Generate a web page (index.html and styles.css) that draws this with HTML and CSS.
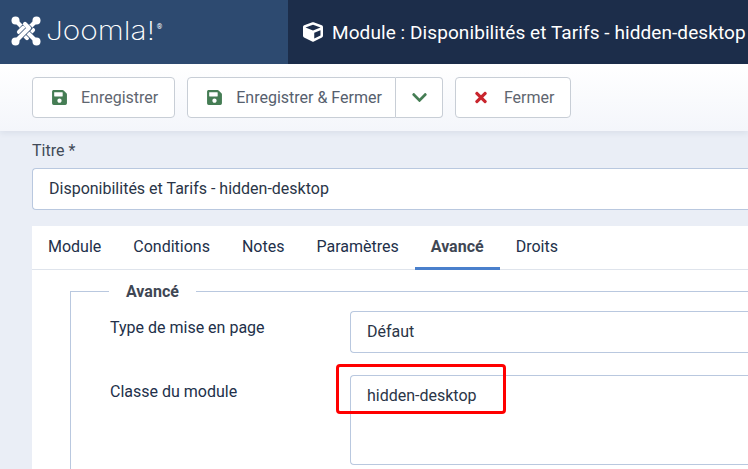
FILE: index.html
```html
<!DOCTYPE html>
<html lang="fr">
  <head>
    <title>Module : Disponibilités et Tarifs - hidden-desktop</title>
    <meta charset="UTF-8" />
    <link rel="stylesheet" href="styles.css">
  </head>
  <body>
    <header class="topbar">
      <div class="brand">
        <svg class="brand-mark" viewBox="0 0 30 30">
          <g fill="none" stroke-linecap="round" stroke-linejoin="round">
            <path stroke="#fff" stroke-width="4.2" d="M5 5 L18 18 L22 14" />
            <path stroke="#2d4a70" stroke-width="5.6" d="M20.5 9.5 L12 18" />
            <path stroke="#fff" stroke-width="4.2" d="M25 5 L12 18 L16 22" />
            <path stroke="#2d4a70" stroke-width="5.6" d="M20.5 20.5 L12 12" />
            <path stroke="#fff" stroke-width="4.2" d="M25 25 L12 12 L8 16" />
            <path stroke="#2d4a70" stroke-width="5.6" d="M9.5 20.5 L18 12" />
            <path stroke="#fff" stroke-width="4.2" d="M5 25 L18 12 L14 8" />
          </g>
          <circle cx="4.5" cy="4.5" r="4" fill="#fff" />
          <circle cx="25.5" cy="4.5" r="4" fill="#fff" />
          <circle cx="4.5" cy="25.5" r="4" fill="#fff" />
          <circle cx="25.5" cy="25.5" r="4" fill="#fff" />
        </svg>
        <span class="brand-name">Joomla!</span><span class="brand-reg">®</span>
      </div>
      <div class="page-title">
        <svg class="title-icon" viewBox="0 0 512 512"><path fill="#fff" d="M239.1 6.3l-208 78c-18.7 7-31.1 25-31.1 45v225.1c0 18.2 10.3 34.8 26.5 42.9l208 104c13.5 6.8 29.4 6.8 42.9 0l208-104c16.3-8.1 26.5-24.8 26.5-42.9V129.3c0-20-12.4-37.9-31.1-44.9l-208-78C262 2.2 250 2.2 239.1 6.3zM256 68.4l192 72v1.1l-192 78-192-78v-1.1l192-72zm32 356V275.5l160-65v133.9l-160 80z"/></svg>
        <h1>Module : Disponibilités et Tarifs - hidden-desktop</h1>
      </div>
    </header>

    <div class="toolbar">
      <button class="btn">
        <svg class="btn-icon" viewBox="0 0 448 512"><path fill="#457d54" d="M433.941 129.941l-83.882-83.882A48 48 0 0 0 316.118 32H48C21.49 32 0 53.49 0 80v352c0 26.51 21.49 48 48 48h352c26.51 0 48-21.49 48-48V163.882a48 48 0 0 0-14.059-33.941zM224 416c-35.346 0-64-28.654-64-64 0-35.346 28.654-64 64-64s64 28.654 64 64c0 35.346-28.654 64-64 64zm96-304.52V212c0 6.627-5.373 12-12 12H76c-6.627 0-12-5.373-12-12V108c0-6.627 5.373-12 12-12h228.52c3.183 0 6.235 1.264 8.485 3.515l3.48 3.48A11.996 11.996 0 0 1 320 111.48z"/></svg>
        Enregistrer
      </button>
      <div class="btn-group">
        <button class="btn btn-main">
          <svg class="btn-icon" viewBox="0 0 448 512"><path fill="#457d54" d="M433.941 129.941l-83.882-83.882A48 48 0 0 0 316.118 32H48C21.49 32 0 53.49 0 80v352c0 26.51 21.49 48 48 48h352c26.51 0 48-21.49 48-48V163.882a48 48 0 0 0-14.059-33.941zM224 416c-35.346 0-64-28.654-64-64 0-35.346 28.654-64 64-64s64 28.654 64 64c0 35.346-28.654 64-64 64zm96-304.52V212c0 6.627-5.373 12-12 12H76c-6.627 0-12-5.373-12-12V108c0-6.627 5.373-12 12-12h228.52c3.183 0 6.235 1.264 8.485 3.515l3.48 3.48A11.996 11.996 0 0 1 320 111.48z"/></svg>
          Enregistrer &amp; Fermer
        </button>
        <button class="btn btn-caret">
          <svg class="caret-icon" viewBox="0 0 448 512"><path fill="#457d54" d="M207.029 381.476L12.686 187.132c-9.373-9.373-9.373-24.569 0-33.941l22.667-22.667c9.357-9.357 24.522-9.375 33.901-.04L224 284.505l154.745-154.021c9.379-9.335 24.544-9.317 33.901.04l22.667 22.667c9.373 9.373 9.373 24.569 0 33.941L240.971 381.476c-9.373 9.372-24.569 9.372-33.942 0z"/></svg>
        </button>
      </div>
      <button class="btn">
        <svg class="close-icon" viewBox="0 0 352 512"><path fill="#c9252d" d="M242.72 256l100.07-100.07c12.28-12.28 12.28-32.19 0-44.48l-22.24-22.24c-12.28-12.28-32.19-12.28-44.48 0L176 189.28 75.93 89.21c-12.28-12.28-32.19-12.28-44.48 0L9.21 111.45c-12.28 12.28-12.28 32.19 0 44.48L109.28 256 9.21 356.07c-12.28 12.28-12.28 32.19 0 44.48l22.24 22.24c12.28 12.28 32.2 12.28 44.48 0L176 322.72l100.07 100.07c12.28 12.28 32.2 12.28 44.48 0l22.24-22.24c12.28-12.28 12.28-32.19 0-44.48L242.72 256z"/></svg>
        Fermer
      </button>
    </div>

    <main class="content">
      <label class="title-label">Titre *</label>
      <div class="field title-field">Disponibilités et Tarifs - hidden-desktop</div>

      <section class="panel">
        <ul class="tabs">
          <li>Module</li>
          <li>Conditions</li>
          <li>Notes</li>
          <li>Paramètres</li>
          <li class="active">Avancé</li>
          <li>Droits</li>
        </ul>

        <div class="tab-body">
          <div class="group">
            <div class="legend">Avancé</div>
            <div class="row row-layout">
              <label>Type de mise en page</label>
              <div class="field select-field">Défaut</div>
            </div>
            <div class="row">
              <label>Classe du module</label>
              <div class="class-wrap">
                <div class="field textarea-field">hidden-desktop</div>
                <div class="highlight-box"></div>
              </div>
            </div>
          </div>
        </div>
      </section>
    </main>
  </body>
</html>
```

FILE: styles.css
```css
html,
body {
  height: 469px;
  overflow: hidden;
}
body {
  margin: 0;
  width: 748px;
  font-family: "Roboto", "Liberation Sans", sans-serif;
  font-size: 16px;
  color: #22304a;
  background-color: #eaeef6;
}

/* top bar */
.topbar {
  display: flex;
  height: 64px;
  background: #1c2d4a;
}
.brand {
  display: flex;
  align-items: flex-start;
  flex: none;
  width: 288px;
  padding: 16px 0 0 11px;
  box-sizing: border-box;
  background: #2d4a70;
  color: #fff;
}
.brand-mark {
  width: 30px;
  height: 30px;
  flex: none;
}
.brand-name {
  margin-left: 5px;
  margin-top: -1px;
  font-family: "Inter", sans-serif;
  font-weight: 200;
  font-size: 26px;
  line-height: 32px;
  transform: scaleX(1.15);
  transform-origin: left;
}
.brand-reg {
  margin-left: 16px;
  font-size: 7px;
  line-height: 12px;
  margin-top: 5px;
}
.page-title {
  display: flex;
  align-items: center;
  flex: 1;
  min-width: 0;
  padding-left: 15px;
  white-space: nowrap;
}
.title-icon {
  width: 20px;
  height: 20px;
  flex: none;
  margin-right: 9px;
}
.page-title h1 {
  margin: 0;
  font-size: 19px;
  font-weight: 400;
  letter-spacing: 0.08px;
  color: #fff;
}

/* toolbar */
.toolbar {
  display: flex;
  gap: 12px;
  height: 67px;
  padding-top: 13px;
  padding-left: 32px;
  box-sizing: border-box;
  background: linear-gradient(#fff, #f4f6fb);
  box-shadow: 0 2px 6px rgba(30, 50, 90, 0.08);
}
.btn {
  display: flex;
  align-items: center;
  height: 41px;
  padding: 0 16px 0 19px;
  border: 1px solid #c8ced6;
  border-radius: 4px;
  background: #fff;
  color: #5f6670;
  font-family: inherit;
  font-size: 16px;
}
.btn-icon {
  width: 15px;
  height: 17px;
  margin-right: 14px;
}
.close-icon {
  width: 12px;
  height: 17px;
  margin-right: 17px;
}
.caret-icon {
  width: 15px;
  height: 17px;
}
.btn-group {
  display: flex;
}
.btn-main {
  border-radius: 4px 0 0 4px;
  padding-right: 13px;
  color: #56606e;
}
.btn-caret {
  border-left: 0;
  border-radius: 0 4px 4px 0;
  padding: 0 15px 0 16px;
}

/* form */
.content {
  padding-left: 32px;
}
.title-label {
  display: block;
  height: 37px;
  line-height: 40px;
  color: #414a58;
}
.field {
  border: 1px solid #b9c8df;
  border-right: 0;
  border-radius: 4px 0 0 4px;
  background: #fff;
  box-sizing: border-box;
  padding: 0 16px;
  color: #2a3547;
}
.title-field {
  height: 42px;
  line-height: 40px;
}
.panel {
  margin-top: 16px;
  background: #fff;
}
.tabs {
  display: flex;
  height: 44px;
  margin: 0;
  padding: 0;
  list-style: none;
  border-bottom: 1px solid #dfe4ec;
  box-sizing: border-box;
}
.tabs li {
  padding: 0 16px;
  line-height: 41px;
  color: #22304a;
}
.tabs .active {
  font-weight: 700;
  color: #3f4754;
  border-bottom: 3px solid #4a80cc;
  height: 44px;
  box-sizing: border-box;
}
.tab-body {
  padding: 21px 0 0 38px;
}
.group {
  position: relative;
  height: 178px;
  box-sizing: border-box;
  border: 1px solid #b9c8df;
  border-right: 0;
  border-bottom: 0;
  padding: 19px 0 0 39px;
}
.legend {
  position: absolute;
  top: -10px;
  left: 38px;
  padding: 0 17px;
  background: #fff;
  font-weight: 700;
  line-height: 20px;
  color: #3f4754;
}
.row {
  display: flex;
}
.row label {
  width: 240px;
  flex: none;
  line-height: 34px;
}
.row-layout {
  margin-bottom: 22px;
}
.select-field {
  flex: 1;
  height: 42px;
  line-height: 40px;
}
.class-wrap {
  position: relative;
  flex: 1;
}
.textarea-field {
  height: 90px;
  line-height: 39px;
}
.highlight-box {
  position: absolute;
  top: -11px;
  left: -14px;
  width: 170px;
  height: 50px;
  box-sizing: border-box;
  border: 3px solid #f00;
  border-radius: 4px;
}
```
